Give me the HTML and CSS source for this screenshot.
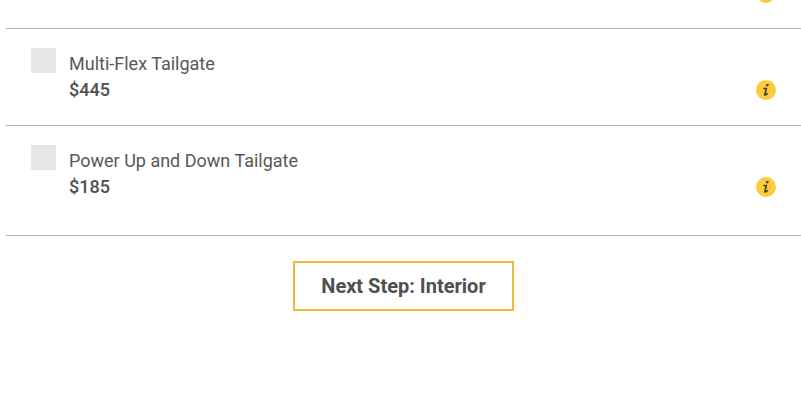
FILE: index.html
```html
<!DOCTYPE html>
<html lang="en">
<head>
    <meta charset="UTF-8">
    <title>Exterior Options</title>
    <link rel="stylesheet" href="styles.css">
</head>
<body>
    <div class="container">
        <div class="option previous">
            <button class="info" type="button" aria-label="More info"><svg viewBox="0 0 20 20"><circle cx="10" cy="10" r="10"/></svg></button>
        </div>
        <div class="option">
            <input type="checkbox" id="multiflex">
            <label for="multiflex">Multi-Flex Tailgate<span class="price">$445</span></label>
            <button class="info" type="button" aria-label="About Multi-Flex Tailgate"><svg viewBox="0 0 20 20"><circle cx="10" cy="10" r="10"/><path class="dot" d="M10.4 4h2.4l-.6 2.2H9.8z"/><path class="stem" d="M7.3 8.5h3L8.8 14.8c.9.4 1.9-.3 3-1.6"/></svg></button>
        </div>
        <div class="option last">
            <input type="checkbox" id="power">
            <label for="power">Power Up and Down Tailgate<span class="price">$185</span></label>
            <button class="info" type="button" aria-label="About Power Up and Down Tailgate"><svg viewBox="0 0 20 20"><circle cx="10" cy="10" r="10"/><path class="dot" d="M10.4 4h2.4l-.6 2.2H9.8z"/><path class="stem" d="M7.3 8.5h3L8.8 14.8c.9.4 1.9-.3 3-1.6"/></svg></button>
        </div>
        <div class="next">
            <button class="next-btn" type="button">Next Step: Interior</button>
        </div>
    </div>
</body>
</html>
```
FILE: styles.css
```css
* { margin: 0; padding: 0; box-sizing: border-box;}
body{ background: #fff; color: #505050; font-family: Roboto, "Liberation Sans", sans-serif; font-size: 18px; line-height: 26px;}
.container{ margin-left: 6px;}
.option{ display: flex; align-items: flex-start; padding: 19px 25px 22px; border-bottom: 1px solid #b0b0b0;}
/* end of the row above, only the tip of its icon shows */
.option.previous{ height: 29px; padding: 0 25px 25px; justify-content: flex-end; align-items: flex-end;}
.option.last{ padding-bottom: 35px;}
.option input{ appearance: none; flex: none; width: 25px; height: 25px; background: #e6e6e6; cursor: pointer;}
.option input:checked{ background: #ffcb31;}
.option label{ flex: 1; padding: 3px 0 0 13px; color: #585858; cursor: pointer;}
.price{ display: block; font-weight: 500; color: #505050;}
.info{ flex: none; align-self: flex-end; width: 20px; height: 20px; margin-bottom: 3px; border: 0; background: none; cursor: pointer;}
.previous .info{ margin-bottom: 0;}
.info svg{ display: block; width: 20px; height: 20px;}
.info circle{ fill: #fdcb3c;}
.info .dot{ fill: #4a4230;}
.info .stem{ fill: none; stroke: #4a4230; stroke-width: 1.7;}
.next{ padding: 25px 0; text-align: center;}
.next-btn{ height: 50px; padding: 0 26px; border: 2px solid #e9bd36; background: #fff; color: #505050; font-family: inherit; font-size: 20px; font-weight: 700; cursor: pointer;}
```
